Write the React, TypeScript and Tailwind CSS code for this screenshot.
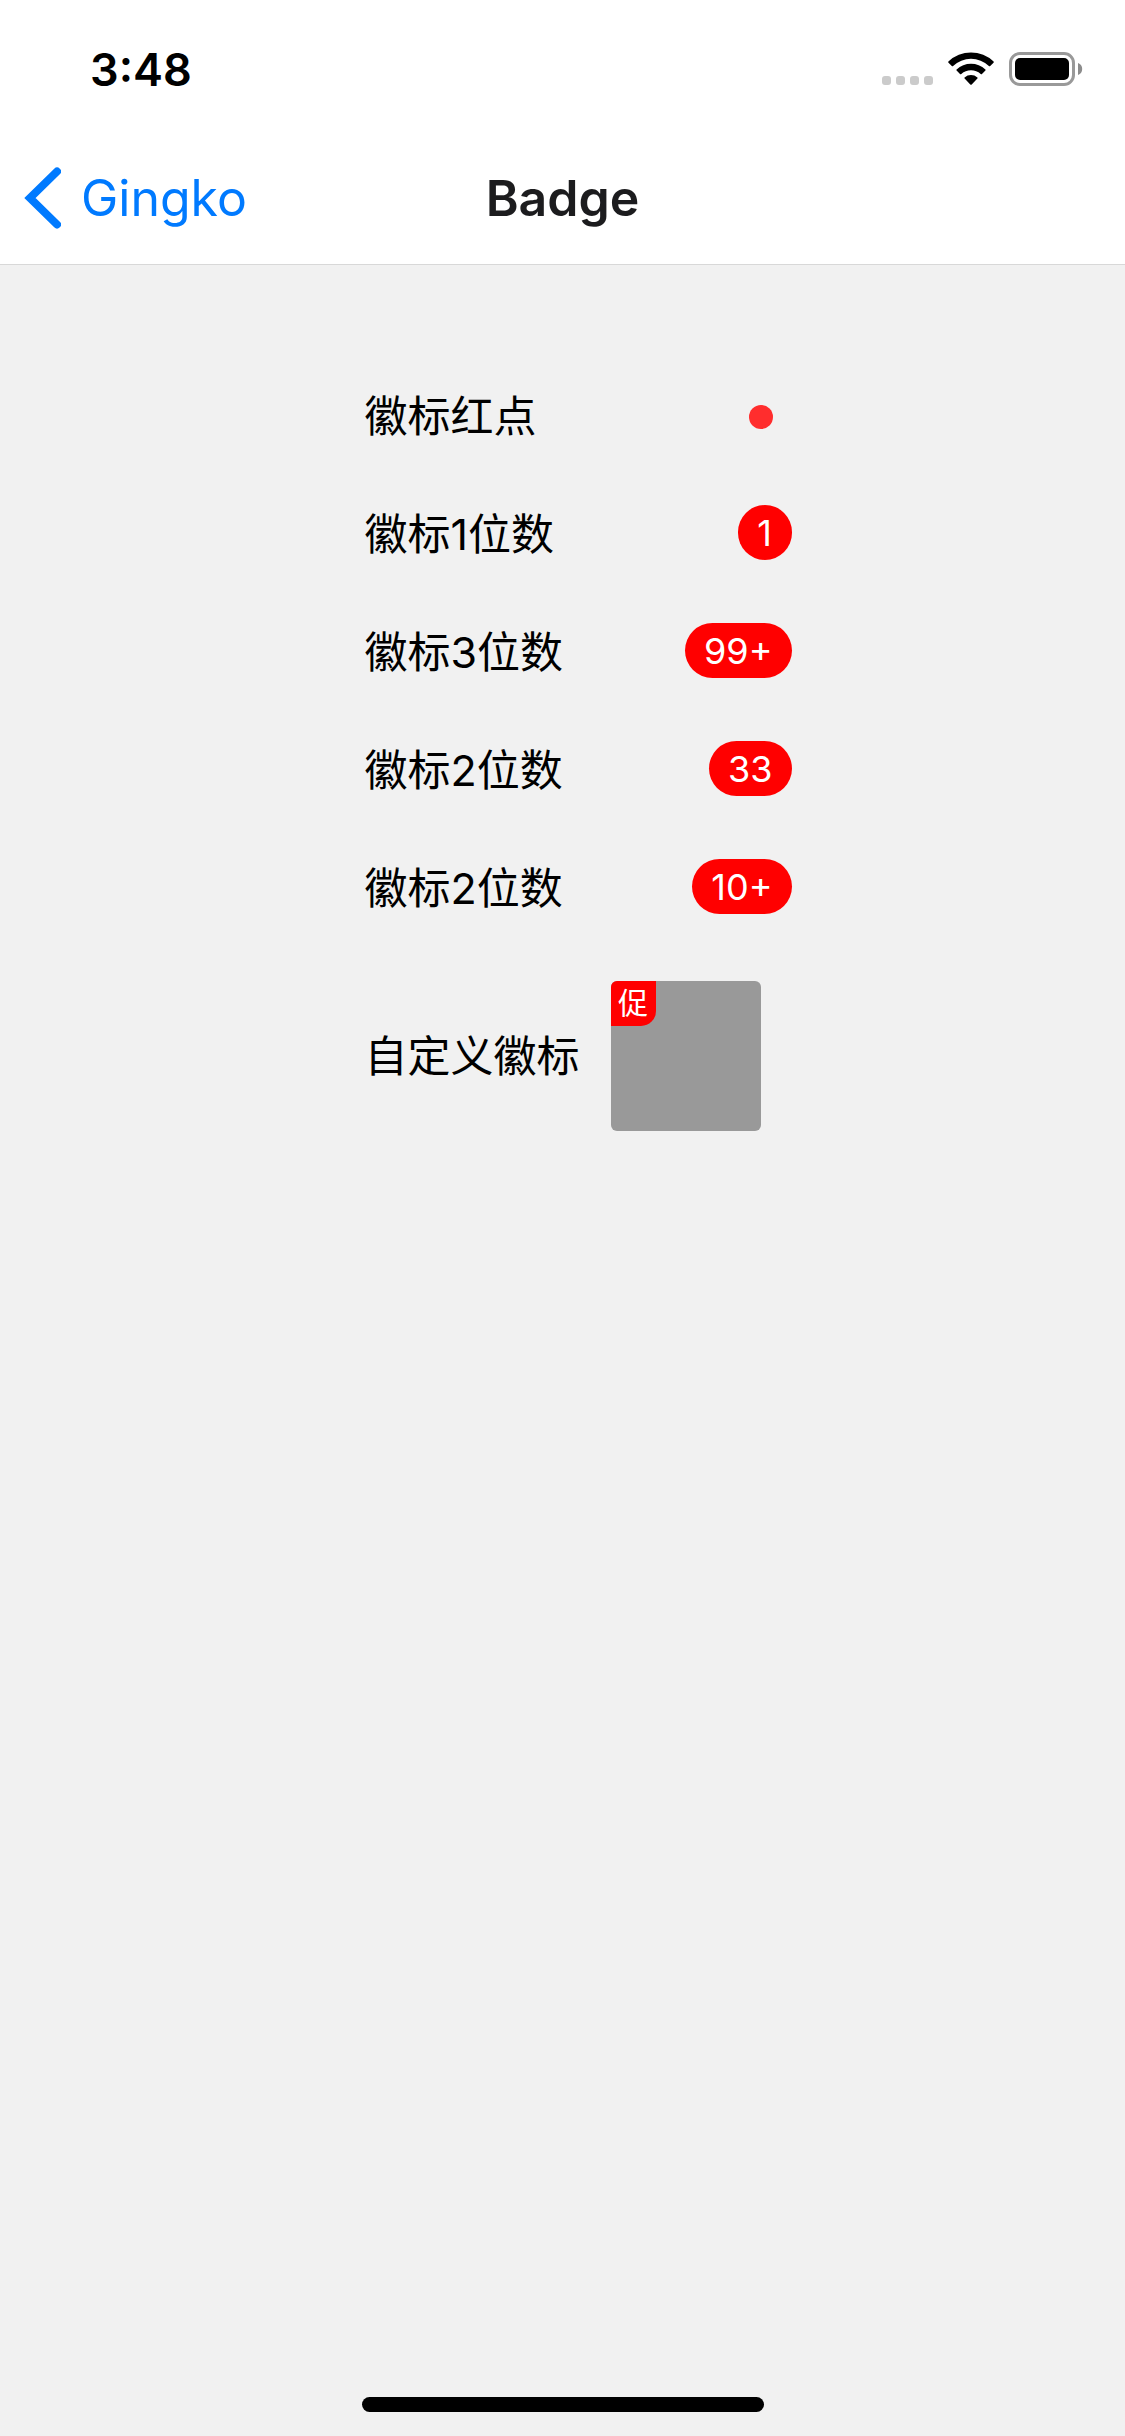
import type { ReactNode } from "react";

function SignalDots() {
  return (
    <div className="mb-px flex gap-[5px] self-end" aria-hidden="true">
      {[0, 1, 2, 3].map((i) => (
        <span key={i} className="size-[9px] rounded-[3px] bg-[#cbcbcb]" />
      ))}
    </div>
  );
}

function WifiIcon() {
  return (
    <svg width="46" height="34" viewBox="0 0 46 34" aria-label="Wi-Fi">
      <path d="M0.4 9.6 Q0 10.2 0.5 10.8 L3.8 14 Q4.5 14.5 5.1 14 A26 26 0 0 1 40.9 14 Q41.5 14.5 42.2 14 L45.5 10.8 Q46 10.2 45.6 9.6 A32.6 32.6 0 0 0 0.4 9.6 Z" />
      <path d="M8.6 17.4 Q8 18 8.6 18.6 L12 22 Q12.6 22.5 13.3 22 A14.6 14.6 0 0 1 32.7 22 Q33.4 22.5 34 22 L37.4 18.6 Q38 18 37.4 17.4 A21 21 0 0 0 8.6 17.4 Z" />
      <path d="M16.6 25.4 Q16 26 16.6 26.6 L22.3 32.5 Q23 33.2 23.7 32.5 L29.4 26.6 Q30 26 29.4 25.4 A9.8 9.8 0 0 0 16.6 25.4 Z" />
    </svg>
  );
}

function BatteryIcon() {
  return (
    <svg width="74" height="34" viewBox="0 0 74 34" aria-label="Battery full">
      <rect x="1.5" y="1.5" width="63" height="31" rx="9.5" fill="none" stroke="#999" strokeWidth="3" />
      <rect x="6" y="6" width="54" height="22" rx="5" />
      <path d="M69 11 A6.4 6.4 0 0 1 69 23 Z" fill="#8c8c8c" />
    </svg>
  );
}

function StatusBar() {
  return (
    <div className="flex h-33 items-center justify-between pt-1.5 pr-[42px] pl-[90px]">
      <time className="text-[45px] leading-none font-semibold">3:48</time>
      <div className="flex items-center gap-[15px]">
        <SignalDots />
        <WifiIcon />
        <BatteryIcon />
      </div>
    </div>
  );
}

function NavBar() {
  return (
    <nav className="grid h-33 grid-cols-[1fr_auto_1fr] items-center">
      <a href="#gingko" className="flex items-center gap-5 pl-[23px] text-[50px] leading-none text-[#007aff]">
        <svg width="38" height="62" viewBox="0 0 38 62" fill="none" stroke="currentColor" strokeWidth="8" strokeLinecap="round" aria-hidden="true">
          <path d="M34 4.5 L7 31 L34 57.5" />
        </svg>
        Gingko
      </a>
      <h1 className="text-[50px] leading-none font-semibold text-[#1c1c1e]">Badge</h1>
    </nav>
  );
}

function Row({ label, children }: { label: string; children: ReactNode }) {
  return (
    <li className="flex h-[59px] items-center justify-between">
      <span>{label}</span>
      {children}
    </li>
  );
}

function CountBadge({ children }: { children: ReactNode }) {
  return (
    <span className="-mr-[31px] h-[55px] min-w-[54px] self-start rounded-full bg-[#ff0000] px-[19px] text-center text-[36px] leading-[56px] text-white">
      {children}
    </span>
  );
}

const counts = [
  { label: "徽标1位数", value: "1" },
  { label: "徽标3位数", value: "99+" },
  { label: "徽标2位数", value: "33" },
  { label: "徽标2位数", value: "10+" },
];

export default function App() {
  return (
    <div className="flex min-h-screen flex-col bg-[#f1f1f1] font-['Inter','Noto_Sans_CJK_SC',sans-serif] text-black">
      <header className="border-b border-[#d8d8d8] bg-white">
        <StatusBar />
        <NavBar />
      </header>
      <main className="flex-1 pt-[122px]">
        <ul className="mx-auto flex w-[396px] flex-col gap-[59px] text-[43px] leading-[59px] whitespace-nowrap">
          <Row label="徽标红点">
            <span className="-mr-3 size-6 rounded-full bg-[#ff2d2d]" />
          </Row>
          {counts.map(({ label, value }) => (
            <Row key={label + value} label={label}>
              <CountBadge>{value}</CountBadge>
            </Row>
          ))}
          <li className="flex items-center justify-between pt-1">
            <span>自定义徽标</span>
            <div className="relative size-[150px] overflow-hidden rounded-md bg-[#999]">
              <span className="absolute top-0 left-0 size-[45px] rounded-br-[15px] bg-[#ff0000] text-center text-[30px] leading-[45px] text-white">
                促
              </span>
            </div>
          </li>
        </ul>
      </main>
      <footer className="flex justify-center pb-6">
        <div className="h-[15px] w-[402px] rounded-full bg-black" />
      </footer>
    </div>
  );
}
